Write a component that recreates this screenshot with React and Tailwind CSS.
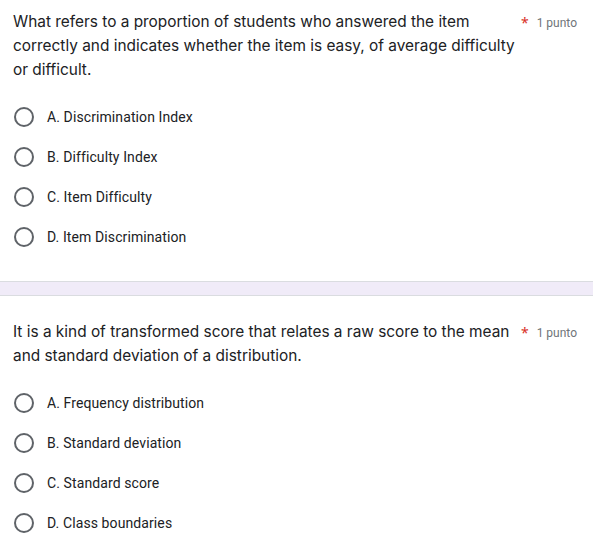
import React from 'react';

const questions = [
  {
    text: 'What refers to a proportion of students who answered the item correctly and indicates whether the item is easy, of average difficulty or difficult.',
    options: ['A. Discrimination Index', 'B. Difficulty Index', 'C. Item Difficulty', 'D. Item Discrimination'],
  },
  {
    text: 'It is a kind of transformed score that relates a raw score to the mean and standard deviation of a distribution.',
    options: ['A. Frequency distribution', 'B. Standard deviation', 'C. Standard score', 'D. Class boundaries'],
  },
];

function Option({ label }) {
  return (
    <label className="flex items-center h-10 pt-[2px] cursor-pointer">
      <span className="w-5 h-5 ml-[14px] rounded-full border-2 border-[#5f6368] shrink-0" />
      <span className="ml-[13px] text-[14px] tracking-[0.1px] text-[#202124] font-['Roboto',sans-serif]">{label}</span>
    </label>
  );
}

function Question({ q }) {
  return (
    <div className="flex pl-[13px] pr-4">
      <div className="w-[508px] text-[15.4px] leading-6 text-[#202124] font-['Inter',sans-serif]">
        {q.text}
      </div>
      <div className="flex items-start ml-auto pt-[3px]">
        <span className="text-[#d93025] text-[14px] leading-5">*</span>
        <span className="ml-[8px] text-[12px] leading-5 text-[#70757a] font-['Roboto',sans-serif]">1 punto</span>
      </div>
    </div>
  );
}

export default function App() {
  return (
    <div className="w-[593px] h-[544px] bg-white overflow-hidden">
      <div className="bg-white pt-[10px] pb-[25px] border-b border-[#dadce0]">
        <Question q={questions[0]} />
        <div className="mt-[14px]">
          {questions[0].options.map((o) => (
            <Option key={o} label={o} />
          ))}
        </div>
      </div>
      <div className="h-[13px] bg-[#f0ebf8]" />
      <div className="bg-white pt-[24px] border-t border-[#dadce0]">
        <Question q={questions[1]} />
        <div className="mt-[14px]">
          {questions[1].options.map((o) => (
            <Option key={o} label={o} />
          ))}
        </div>
      </div>
    </div>
  );
}
